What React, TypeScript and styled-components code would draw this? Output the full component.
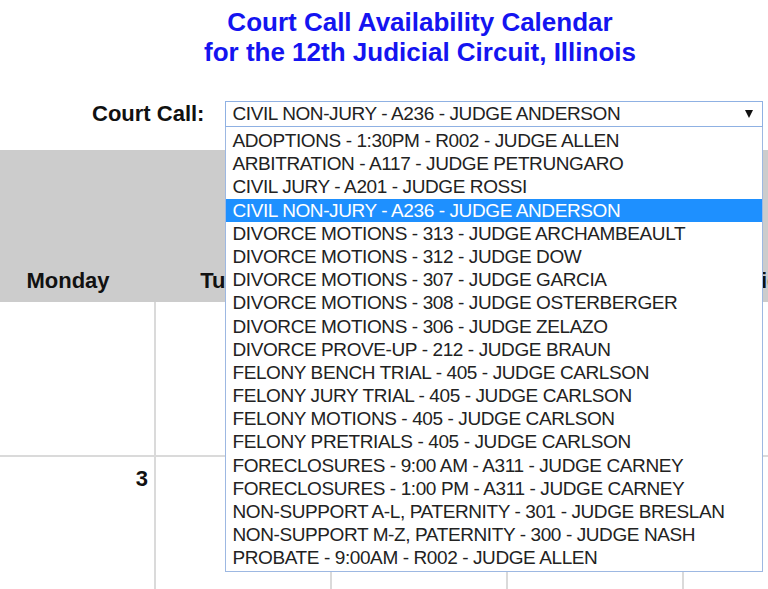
import React from 'react'
import styled, { createGlobalStyle } from 'styled-components'

const GlobalStyle = createGlobalStyle`
  html, body {
    margin: 0;
    padding: 0;
    background: #fff;
    overflow: hidden;
  }
  body {
    font-family: 'Liberation Sans', Arial, sans-serif;
    color: #111;
  }
`

const courtCalls = [
  'ADOPTIONS - 1:30PM - R002 - JUDGE ALLEN',
  'ARBITRATION - A117 - JUDGE PETRUNGARO',
  'CIVIL JURY - A201 - JUDGE ROSSI',
  'CIVIL NON-JURY - A236 - JUDGE ANDERSON',
  'DIVORCE MOTIONS - 313 - JUDGE ARCHAMBEAULT',
  'DIVORCE MOTIONS - 312 - JUDGE DOW',
  'DIVORCE MOTIONS - 307 - JUDGE GARCIA',
  'DIVORCE MOTIONS - 308 - JUDGE OSTERBERGER',
  'DIVORCE MOTIONS - 306 - JUDGE ZELAZO',
  'DIVORCE PROVE-UP - 212 - JUDGE BRAUN',
  'FELONY BENCH TRIAL - 405 - JUDGE CARLSON',
  'FELONY JURY TRIAL - 405 - JUDGE CARLSON',
  'FELONY MOTIONS - 405 - JUDGE CARLSON',
  'FELONY PRETRIALS - 405 - JUDGE CARLSON',
  'FORECLOSURES - 9:00 AM - A311 - JUDGE CARNEY',
  'FORECLOSURES - 1:00 PM - A311 - JUDGE CARNEY',
  'NON-SUPPORT A-L, PATERNITY - 301 - JUDGE BRESLAN',
  'NON-SUPPORT M-Z, PATERNITY - 300 - JUDGE NASH',
  'PROBATE - 9:00AM - R002 - JUDGE ALLEN',
]

const selected = 'CIVIL NON-JURY - A236 - JUDGE ANDERSON'

const weekdays = ['Monday', 'Tuesday', 'Wednesday', 'Thursday', 'Friday']

// first week is empty, the month starts on a weekend
const weeks: (number | null)[][] = [
  [null, null, null, null, null],
  [3, 4, 5, 6, 7],
]

const Page = styled.div`
  width: 880px;
  margin-left: -20px;
`

const Title = styled.h1`
  margin: 7px 0 0;
  font-size: 26px;
  line-height: 30px;
  font-weight: bold;
  color: #1414f0;
  text-align: center;
`

const PickerRow = styled.div`
  display: flex;
  align-items: center;
  gap: 21px;
  margin-top: 34px;
  padding-left: 112px;
  height: 26px;
`

const Label = styled.label`
  font-size: 22px;
  font-weight: bold;
  color: #111;
`

const SelectWrap = styled.div`
  position: relative;
  width: 538px;
`

const SelectBox = styled.div`
  height: 26px;
  box-sizing: border-box;
  border: 1px solid #8fb1e3;
  display: flex;
  align-items: center;
  justify-content: space-between;
  padding: 0 9px 0 6px;
  font-size: 19px;
  letter-spacing: -0.4px;
  color: #222;
  white-space: nowrap;
`

const Arrow = styled.span`
  width: 0;
  height: 0;
  border-left: 4px solid transparent;
  border-right: 4px solid transparent;
  border-top: 8px solid #111;
`

const OptionList = styled.ul`
  position: absolute;
  top: 100%;
  left: 0;
  right: 0;
  margin: 0;
  padding: 2px 0 1px;
  list-style: none;
  background: #fff;
  border: 1px solid #9db8e2;
  border-top: none;
  z-index: 2;
`

const Option = styled.li<{ $active?: boolean }>`
  height: 23.2px;
  line-height: 23.2px;
  padding: 0 6px;
  font-size: 19px;
  letter-spacing: -0.4px;
  white-space: nowrap;
  color: ${p => (p.$active ? '#fff' : '#222')};
  background: ${p => (p.$active ? '#1e90ff' : 'transparent')};
`

const Calendar = styled.div`
  display: grid;
  grid-template-columns: repeat(5, 176px);
  margin-top: 23px;
`

const DayHead = styled.div`
  height: 152px;
  box-sizing: border-box;
  background: #ccc;
  display: flex;
  align-items: flex-end;
  justify-content: center;
  padding-bottom: 8px;
  font-size: 22px;
  font-weight: bold;
  color: #111;
`

const DayCell = styled.div`
  height: 155px;
  box-sizing: border-box;
  border-right: 2px solid #dadada;
  border-bottom: 2px solid #dadada;
  padding: 9px 6px;
  text-align: right;
  font-size: 22px;
  font-weight: bold;
  color: #111;
`

const App: React.FC = () => (
  <Page>
    <GlobalStyle />
    <Title>
      Court Call Availability Calendar
      <br />
      for the 12th Judicial Circuit, Illinois
    </Title>
    <PickerRow>
      <Label>Court Call:</Label>
      <SelectWrap>
        <SelectBox>
          <span>{selected}</span>
          <Arrow />
        </SelectBox>
        <OptionList>
          {courtCalls.map(c => (
            <Option key={c} $active={c === selected}>
              {c}
            </Option>
          ))}
        </OptionList>
      </SelectWrap>
    </PickerRow>
    <Calendar>
      {weekdays.map(d => (
        <DayHead key={d}>{d}</DayHead>
      ))}
      {weeks.map((w, i) =>
        w.map((n, j) => <DayCell key={`${i}-${j}`}>{n ?? ''}</DayCell>)
      )}
    </Calendar>
  </Page>
)

export default App
